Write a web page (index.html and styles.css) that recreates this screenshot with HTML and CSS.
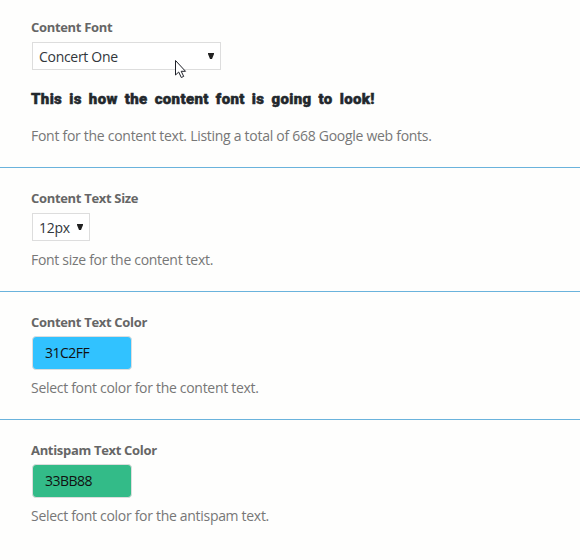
FILE: index.html
```
<!DOCTYPE html>
<html lang="en">
<head>
  <meta charset="UTF-8">
  <title>Font Settings</title>
  <link rel="stylesheet" href="styles.css">
</head>
<body>
  <div class="option option-font">
    <label class="title">Content Font</label>
    <div class="select select-wide">
      <span>Concert One</span>
      <svg class="arrow" width="6" height="6" viewBox="0 0 6 6"><path d="M0 0h6v1L4 6H2L0 1z" fill="#222"/></svg>
      <svg class="cursor" width="13" height="20" viewBox="0 0 13 20"><path d="M1.500 1.500v14.500l3.200-3 2.600 5.500 2.400-1.100-2.500-5.100h4.300z" fill="#fff" stroke="#1e2028" stroke-width="1"/></svg>
    </div>
    <p class="preview">This is how the content font is going to look!</p>
    <p class="desc desc-font">Font for the content text. Listing a total of 668 Google web fonts.</p>
  </div>

  <div class="option">
    <label class="title">Content Text Size</label>
    <div class="select select-small">
      <span>12px</span>
      <svg class="arrow" width="6" height="6" viewBox="0 0 6 6"><path d="M0 0h6v1L4 6H2L0 1z" fill="#222"/></svg>
    </div>
    <p class="desc">Font size for the content text.</p>
  </div>

  <div class="option option-color">
    <label class="title">Content Text Color</label>
    <div class="color blue">31C2FF</div>
    <p class="desc">Select font color for the content text.</p>
  </div>

  <div class="option option-color last">
    <label class="title">Antispam Text Color</label>
    <div class="color green">33BB88</div>
    <p class="desc">Select font color for the antispam text.</p>
  </div>
</body>
</html>
```
FILE: styles.css
```
body {
  margin: 0;
  background-color: #fefefd;
  font-family: "Open Sans", "Noto Sans", sans-serif;
  font-size: 14px;
  letter-spacing: -0.3px;
  color: #777;
}

/* One settings row */
.option {
  box-sizing: border-box;
  height: 124px;
  padding: 20px 0 0 31px;
  border-bottom: 1px solid #6ab3dc;
  white-space: nowrap;
}

.option-font {
  height: 168px;
  padding-top: 17px;
}

.option-color {
  height: 128px;
}

.last {
  border-bottom: none;
}

.title {
  display: block;
  width: max-content;
  height: 20px;
  line-height: 20px;
  font-size: 13px;
  font-weight: 700;
  letter-spacing: -0.32px;
  color: #666;
}

/* Dropdowns */
.select {
  position: relative;
  box-sizing: border-box;
  display: flex;
  align-items: center;
  justify-content: space-between;
  height: 28px;
  margin: 5px 0 0 1px;
  padding: 0 6px;
  border: 1px solid #ddd;
  background-color: #fff;
  color: #32373c;
}

.select-wide {
  width: 189px;
}

.select-small {
  width: 58px;
}

.arrow {
  margin-bottom: 1px;
}

.cursor {
  position: absolute;
  left: 141px;
  top: 16px;
}

.preview {
  width: max-content;
  margin: 19px 0 0;
  height: 20px;
  line-height: 20px;
  font-family: Roboto, sans-serif;
  font-size: 15px;
  font-weight: 900;
  letter-spacing: 0.35px;
  word-spacing: 3px;
  -webkit-text-stroke: 0.5px #23282d;
  color: #23282d;
}

.desc {
  width: max-content;
  margin: 9px 0 0;
  line-height: 20px;
}

.desc-font {
  margin-top: 17px;
  letter-spacing: -0.28px;
}

/* Color pickers */
.color {
  box-sizing: border-box;
  width: 100px;
  height: 34px;
  margin: 4px 0 0 1px;
  padding-left: 12px;
  border: 1px solid #ddd;
  border-radius: 4px;
  line-height: 31px;
  letter-spacing: -0.5px;
  color: #111;
}

.blue {
  background-color: #31c2ff;
}

.green {
  background-color: #33bb88;
}

.color + .desc {
  margin-top: 8px;
}
```
